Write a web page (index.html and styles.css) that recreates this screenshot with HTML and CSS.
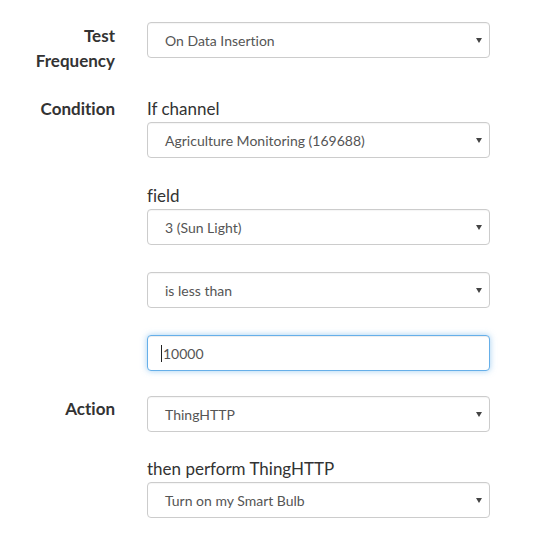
FILE: index.html
```html
<!DOCTYPE html>
<html>
<head>
<meta charset="utf-8">
<link rel="stylesheet" href="styles.css">
</head>
<body>
<div class="form">
  <div class="row row-freq">
    <div class="label">Test<br>Frequency</div>
    <div class="field">
      <div class="select"><span>On Data Insertion</span></div>
    </div>
  </div>
  <div class="row row-cond">
    <div class="label label-single">Condition</div>
    <div class="field">
      <div class="sub-label">If channel</div>
      <div class="select"><span>Agriculture Monitoring (169688)</span></div>
      <div class="sub-label gap-field">field</div>
      <div class="select"><span>3 (Sun Light)</span></div>
      <div class="select gap-sel"><span>is less than</span></div>
      <div class="input gap-sel"><span class="caret"></span>10000</div>
    </div>
  </div>
  <div class="row row-action">
    <div class="label label-action">Action</div>
    <div class="field">
      <div class="select"><span>ThingHTTP</span></div>
      <div class="sub-label gap-then">then perform ThingHTTP</div>
      <div class="select"><span>Turn on my Smart Bulb</span></div>
    </div>
  </div>
</div>
</body>
</html>
```
FILE: styles.css
```css
html, body {
  margin: 0;
  padding: 0;
  background: #fff;
}
body {
  font-family: "Lato", "Open Sans", sans-serif;
  font-variant-ligatures: none;
  color: #333;
}
.form {
  padding-top: 22px;
  width: 490px;
}
.row {
  display: grid;
  grid-template-columns: 115px 343px;
  column-gap: 32px;
}
.row-cond { margin-top: 23px; }
.row-action { margin-top: 25px; }
.label {
  text-align: right;
  font-weight: 700;
  font-size: 17px;
  line-height: 25px;
  color: #333;
  padding-top: 1px;
}
.label-single { line-height: 26px; padding-top: 0; }
.label-action { line-height: 26px; padding-top: 0; }
.field {
  display: flex;
  flex-direction: column;
}
.sub-label {
  font-size: 17px;
  line-height: 26px;
  color: #333;
}
.gap-field { margin-top: 25px; }
.gap-then { margin-top: 24px; }
.gap-sel { margin-top: 27px; }
.select, .input {
  box-sizing: border-box;
  height: 36px;
  border: 1px solid #ccc;
  border-radius: 4px;
  background: #fff;
  font-size: 14px;
  color: #555;
  display: flex;
  align-items: center;
  position: relative;
}
.select {
  padding-left: 17px;
  box-shadow: inset 0 1px 1px rgba(0,0,0,0.04);
}
.select::after {
  content: "";
  position: absolute;
  right: 7px;
  top: 15px;
  border-left: 3px solid transparent;
  border-right: 3px solid transparent;
  border-top: 5px solid #444;
}
.input {
  padding-left: 13px;
  border-color: #66afe9;
  box-shadow: inset 0 1px 1px rgba(0,0,0,0.075), 0 0 6px rgba(102,175,233,0.6);
  color: #555;
}
.caret {
  display: inline-block;
  width: 1px;
  height: 17px;
  background: #222;
  margin-right: 1px;
}
```
